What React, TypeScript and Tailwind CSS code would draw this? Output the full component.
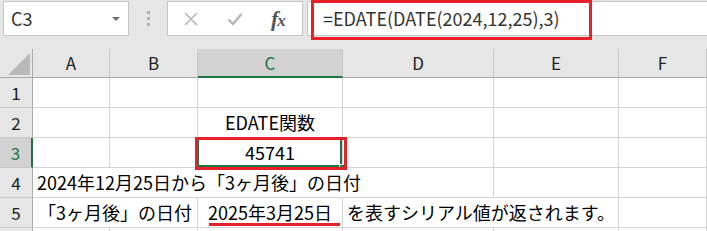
import React from 'react';

const font = { fontFamily: '"Noto Sans CJK JP", "Noto Sans", sans-serif' };

const cols = ['A', 'B', 'C', 'D', 'E', 'F'];

function RowHead({ n, active = false }: { n?: number; active?: boolean }) {
  return (
    <div
      className={`flex items-center justify-center text-[17px] border-b border-b-[#c8c8c8] ${
        active
          ? 'bg-[#d2d2d2] text-[#217346] border-r-2 border-r-[#217346]'
          : 'bg-[#e6e6e6] text-[#222] border-r border-r-[#ababab]'
      }`}
    >
      {n}
    </div>
  );
}

function Cell({ className = '', children }: { className?: string; children?: React.ReactNode }) {
  return (
    <div className={`border-r border-b border-[#d4d4d4] flex items-center whitespace-nowrap text-[18px] text-black ${className}`}>
      {children}
    </div>
  );
}

export default function App() {
  return (
    <div className="w-[707px] h-[231px] overflow-hidden bg-white relative" style={font}>
      {/* Formula bar */}
      <div className="h-[49px] bg-[#e6e6e6] flex items-start pt-[1px] pl-[3px]">
        <div className="w-[126px] h-[35px] bg-white border border-[#c6c6c6] flex items-center justify-between pl-[7px] pr-[8px]">
          <span className="text-[18px] text-[#333]">C3</span>
          <span className="w-0 h-0 border-l-[4px] border-r-[4px] border-t-[4px] border-l-transparent border-r-transparent border-t-[#707070]" />
        </div>
        <div className="w-[38px] h-[35px] flex flex-col items-center justify-center gap-[3px]">
          <span className="w-[3px] h-[3px] bg-[#b0b0b0]" />
          <span className="w-[3px] h-[3px] bg-[#b0b0b0]" />
          <span className="w-[3px] h-[3px] bg-[#b0b0b0]" />
        </div>
        <div className="w-[136px] h-[35px] bg-white border border-[#c6c6c6] flex items-center pl-[15px] gap-[28px]">
          <svg width="16" height="16" viewBox="0 0 16 16" fill="none" stroke="#b5b5b5" strokeWidth="1.6">
            <path d="M2 2L14 14M14 2L2 14" />
          </svg>
          <svg width="16" height="14" viewBox="0 0 16 14" fill="none" stroke="#b5b5b5" strokeWidth="2.4">
            <path d="M1.5 7.5L6 12L14.5 2" />
          </svg>
          <span
            className="text-[22px] italic font-bold text-[#555] leading-none tracking-[-1px]"
            style={{ fontFamily: '"Liberation Serif", serif' }}
          >
            f<span className="text-[17px]">x</span>
          </span>
        </div>
        <div className="ml-[4px] flex-1 h-[35px] bg-white border border-[#c6c6c6] border-r-0 flex items-center pl-[15px]">
          <span className="text-[18px] text-[#333]">=EDATE(DATE(2024,12,25),3)</span>
        </div>
      </div>

      {/* Sheet grid */}
      <div className="grid grid-cols-[33px_77px_88px_145px_151px_125px_88px] grid-rows-[29px_30px_30px_30px_30px_30px_30px]">
        {/* column headers */}
        <div className="bg-[#e6e6e6] border-r border-r-[#ababab] border-b border-b-[#ababab] relative">
          <svg className="absolute left-[8px] top-[4px]" width="22" height="22" viewBox="0 0 22 22">
            <polygon points="22,0 22,22 0,22" fill="#b9b9b9" />
          </svg>
        </div>
        {cols.map((c) => (
          <div
            key={c}
            className={`flex items-center justify-center text-[17px] ${
              c === 'C'
                ? 'bg-[#d2d2d2] text-[#217346] border-b-2 border-b-[#217346] border-r border-r-[#c8c8c8]'
                : 'bg-[#e6e6e6] text-[#222] border-b border-b-[#ababab] border-r border-r-[#c8c8c8]'
            }`}
          >
            {c}
          </div>
        ))}

        {/* row 1 */}
        <RowHead n={1} />
        <Cell /><Cell /><Cell /><Cell /><Cell /><Cell />

        {/* row 2 */}
        <RowHead n={2} />
        <Cell /><Cell />
        <Cell className="justify-center">EDATE関数</Cell>
        <Cell /><Cell /><Cell />

        {/* row 3 */}
        <RowHead n={3} active />
        <Cell /><Cell />
        <Cell className="justify-center relative">
          <div className="absolute -left-[1px] -top-[1px] right-0 bottom-0 border-2 border-[#217346]" />
          <div className="absolute -right-[3px] -bottom-[3px] w-[6px] h-[6px] bg-[#217346] border border-white" />
          <span className="relative">45741</span>
        </Cell>
        <Cell /><Cell /><Cell />

        {/* row 4 */}
        <RowHead n={4} />
        <Cell className="col-span-4 pl-[4px]">2024年12月25日から「3ヶ月後」の日付</Cell>
        <Cell /><Cell />

        {/* row 5 */}
        <RowHead n={5} />
        <Cell className="col-span-2 justify-center">「3ヶ月後」の日付</Cell>
        <Cell className="justify-center">2025年3月25日</Cell>
        <Cell className="col-span-2 pl-[4px]">を表すシリアル値が返されます。</Cell>
        <Cell />

        {/* row 6, only a sliver is visible */}
        <RowHead />
        <Cell /><Cell /><Cell /><Cell /><Cell /><Cell />
      </div>

      {/* red highlight marks */}
      <div className="absolute left-[311px] top-0 w-[281px] h-[40px] border-[3px] border-[#e8202a]" />
      <div className="absolute left-[195px] top-[137px] w-[152px] h-[33px] border-[3px] border-[#e8202a]" />
      <div className="absolute left-[209px] top-[223px] w-[131px] h-[3px] bg-[#e8202a]" />
    </div>
  );
}
